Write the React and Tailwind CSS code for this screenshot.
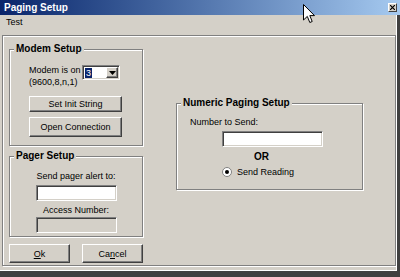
const FONT = "font-['Liberation_Sans',Arial,sans-serif]";

function RaisedButton({ className = '', children }) {
  return (
    <button
      type="button"
      className={`flex items-center justify-center bg-[#d4d0c8] border border-t-white border-l-white border-r-[#404040] border-b-[#404040] shadow-[inset_-1px_-1px_0_#808080] text-[9px] leading-[12px] text-black ${className}`}
    >
      {children}
    </button>
  );
}

function Field({ className = '', disabled = false }) {
  return (
    <div
      className={`border border-t-[#808080] border-l-[#808080] border-r-white border-b-white shadow-[inset_1px_1px_0_#404040,inset_-1px_-1px_0_#d4d0c8] ${disabled ? 'bg-[#d4d0c8]' : 'bg-white'} ${className}`}
    />
  );
}

function Group({ title, className = '', children }) {
  return (
    <fieldset className={`border border-[#808080] shadow-[1px_1px_0_#fff,inset_1px_1px_0_#fff] ${className}`}>
      <legend className="ml-[4px] px-[2px] bg-[#d4d0c8] text-[10px] leading-[12px] font-bold">{title}</legend>
      {children}
    </fieldset>
  );
}

function Combo({ className = '' }) {
  return (
    <div
      className={`flex items-center w-[38px] h-[15px] bg-white border border-t-[#808080] border-l-[#808080] border-r-white border-b-white shadow-[inset_1px_1px_0_#404040,inset_-1px_-1px_0_#d4d0c8] ${className}`}
    >
      <span className="ml-[2px] w-[7px] h-[10px] bg-[#0a246a] text-white text-[9px] leading-[10px] pl-[1px]">3</span>
      <div className="ml-auto mr-[1px] w-[12px] h-[11px] flex items-center justify-center bg-[#d4d0c8] border border-t-white border-l-white border-r-[#404040] border-b-[#404040] shadow-[inset_-1px_-1px_0_#808080]">
        <svg width="7" height="4" viewBox="0 0 7 4">
          <path d="M0 0 H7 L3.5 4 Z" fill="#000" />
        </svg>
      </div>
    </div>
  );
}

function Radio() {
  return (
    <svg width="10" height="10" viewBox="0 0 10 10">
      <circle cx="5" cy="5" r="4.5" fill="#fff" stroke="#808080" />
      <circle cx="5" cy="5" r="2" fill="#000" />
    </svg>
  );
}

export default function App() {
  return (
    <div className={`relative w-[400px] h-[277px] overflow-hidden bg-[#d4d0c8] text-black flex flex-col ${FONT}`}>
      <div className="h-[15px] flex items-center justify-between bg-gradient-to-r from-[#0a246a] to-[#a6caf0] pl-[4px] pr-[3px]">
        <span className="text-white text-[10px] font-bold leading-none">Paging Setup</span>
        <div className="w-[9px] h-[9px] flex items-center justify-center bg-[#d4d0c8] border border-t-white border-l-white border-r-[#404040] border-b-[#404040]">
          <svg width="5" height="5" viewBox="0 0 5 5">
            <path d="M0 0 L5 5 M5 0 L0 5" stroke="#000" strokeWidth="1.2" />
          </svg>
        </div>
      </div>

      <div className="flex-1 flex flex-col border-r-[3px] border-b-[6px] border-[#404040] shadow-[inset_-1px_-1px_0_#fff]">
        <div className="h-[16px] pl-[6px] flex items-center text-[9px]">Test</div>

        <div className="mt-[4px] ml-[2px] mr-[1px] h-[231px] border border-[#808080] shadow-[1px_1px_0_#fff,inset_1px_1px_0_#fff] flex items-start pt-[7px] pl-[6px]">
          <div className="w-[134px] flex flex-col">
            <Group title="Modem Setup" className="h-[103px]">
              <div className="pl-[19px] pt-[9px] flex flex-col items-start">
                <div className="flex items-start">
                  <div className="w-[53px] text-[9px] leading-[12px] whitespace-nowrap">
                    Modem is on
                    <br />
                    (9600,8,n,1)
                  </div>
                  <Combo className="mt-[1px]" />
                </div>
                <RaisedButton className="mt-[8px] w-[93px] h-[16px]">Set Init String</RaisedButton>
                <RaisedButton className="mt-[5px] w-[93px] h-[20px]">Open Connection</RaisedButton>
              </div>
            </Group>

            <Group title="Pager Setup" className="mt-[4px] h-[87px]">
              <div className="pt-[8px] flex flex-col items-center text-[9px] leading-[12px]">
                <span>Send pager alert to:</span>
                <Field className="mt-[3px] w-[81px] h-[16px]" />
                <span className="mt-[3px]">Access Number:</span>
                <Field disabled className="mt-[1px] w-[81px] h-[16px]" />
              </div>
            </Group>

            <div className="mt-[7px] flex gap-[12px]">
              <RaisedButton className="w-[61px] h-[19px]">
                <span className="underline">O</span>k
              </RaisedButton>
              <RaisedButton className="w-[61px] h-[19px]">
                Ca<span className="underline">n</span>cel
              </RaisedButton>
            </div>
          </div>

          <Group title="Numeric Paging Setup" className="ml-[33px] mt-[54px] w-[187px] h-[93px]">
            <div className="pt-[7px] pl-[13px] flex flex-col items-start text-[9px] leading-[12px]">
              <span>Number to Send:</span>
              <Field className="mt-[3px] ml-[32px] w-[101px] h-[16px]" />
              <span className="mt-[4px] ml-[64px] font-bold text-[10px]">OR</span>
              <div className="mt-[3px] ml-[32px] flex items-center gap-[5px]">
                <Radio />
                <span>Send Reading</span>
              </div>
            </div>
          </Group>
        </div>
      </div>

      <svg className="absolute left-[303px] top-[4px]" width="12" height="20" viewBox="0 0 12 20">
        <path d="M0.5 0.5 V16 L4.3 12.4 L6.8 18.5 L9.2 17.5 L6.8 11.6 H11.5 Z" fill="#fff" stroke="#000" strokeWidth="1" strokeLinejoin="miter" />
      </svg>
    </div>
  );
}
